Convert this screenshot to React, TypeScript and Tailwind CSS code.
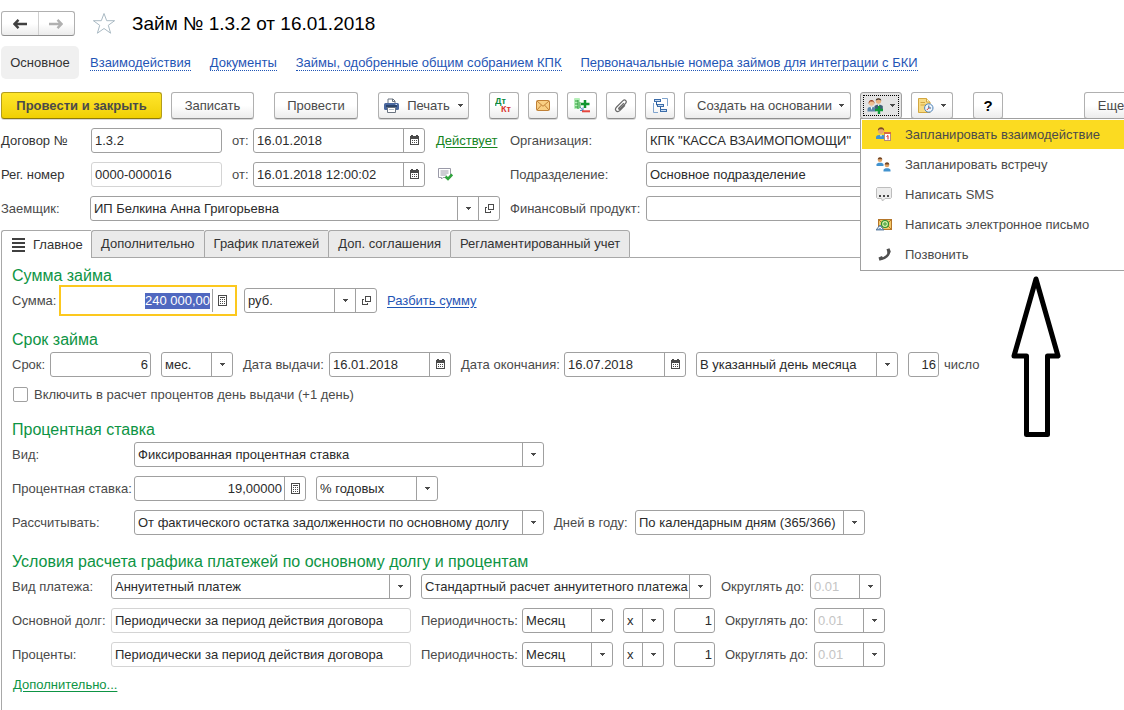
import React, { useEffect, useRef } from "react";
import clsx from "clsx";

const ChevronIcon = () => (
  <svg width="5" height="3" viewBox="0 0 5 3" className="shrink-0">
    <path d="M0 0H5V1H4V2H3V3H2V2H1V1H0Z" fill="#4a4a4a" />
  </svg>
);

const CalendarIcon = () => (
  <svg width="11" height="11" viewBox="0 0 11 11" shapeRendering="crispEdges">
    <path d="M1 1H2V0H4V1H7V0H9V1H10V10H1Z" fill="#4a4a4a" />
    <path d="M2 4H9V9H2Z" fill="#fff" />
    <path d="M3 5h1v1H3zM5 5h1v1H5zM7 5h1v1H7zM3 7h1v1H3zM5 7h1v1H5zM7 7h1v1H7z" fill="#4a4a4a" />
  </svg>
);

const CalculatorIcon = () => (
  <svg width="9" height="11" viewBox="0 0 9 11" shapeRendering="crispEdges">
    <path d="M.5 .5H8.5V10.5H.5Z" fill="#fff" stroke="#4a4a4a" />
    <path
      d="M2 2h5v1H2zM2 4h1v1H2zM4 4h1v1H4zM6 4h1v1H6zM2 6h1v1H2zM4 6h1v1H4zM6 6h1v1H6zM2 8h1v1H2zM4 8h1v1H4zM6 8h1v1H6z"
      fill="#4a4a4a"
    />
  </svg>
);

const OpenIcon = () => (
  <svg width="9" height="9" viewBox="0 0 9 9" shapeRendering="crispEdges">
    <path
      d="M3.5 .5H8.5V5.5H3.5ZM2 3.5H.5V8.5H5.5V7"
      fill="none"
      stroke="#4a4a4a"
    />
  </svg>
);

const ArrowIcon = ({ color, flip }: { color: string; flip?: boolean }) => (
  <svg
    width="14"
    height="10"
    viewBox="0 0 14 10"
    className={clsx(flip && "rotate-180")}
  >
    <path d="M5.5 .8L1.5 5L5.5 9.2M2 5H14" fill="none" stroke={color} strokeWidth="2.4" />
  </svg>
);

const StarIcon = () => (
  <svg width="24" height="23" viewBox="0 0 24 23">
    <path
      d="M12 1.5L14.7 8.7H22.6L16.3 13.3L18.6 21.2L12 16.5L5.4 21.2L7.7 13.3L1.4 8.7H9.3Z"
      fill="#fff"
      stroke="#a9b9c3"
    />
  </svg>
);

const PrinterIcon = () => (
  <svg width="15" height="15" viewBox="0 0 15 15">
    <path d="M4 6V1H9L11 3V6" fill="#fff" stroke="#6b7480" />
    <path d="M8.5 1V3.5H11" fill="none" stroke="#6b7480" />
    <rect x="0" y="5" width="15" height="7" rx="1.5" fill="#4a68a0" />
    <path d="M2 8H13" stroke="#1f3557" strokeWidth="1.4" />
    <rect x="11.5" y="6" width="1.5" height="1" fill="#cfe0f5" />
    <path d="M3.5 9.5H11.5V14.5H3.5Z" fill="#fff" stroke="#6b7480" />
    <path d="M5 11.5H10" stroke="#b5bcc6" />
  </svg>
);

const DebitCreditIcon = () => (
  <svg width="18" height="17" viewBox="0 0 18 17">
    <text x="0" y="7" fill="#0a8a3c" fontSize="9" fontWeight="bold">
      Дт
    </text>
    <text x="6" y="15" fill="#d8352f" fontSize="9" fontWeight="bold">
      Кт
    </text>
  </svg>
);

const MailIcon = () => (
  <svg width="14" height="11" viewBox="0 0 14 11">
    <rect x=".5" y=".5" width="13" height="10" rx="1" fill="#f9cf83" stroke="#c08036" />
    <path d="M1 1L7 6.3L13 1M1 10L5.3 5.2M13 10L8.7 5.2" fill="none" stroke="#c08036" />
  </svg>
);

const ListPlusIcon = () => (
  <svg width="16" height="15" viewBox="0 0 16 15">
    <rect x="0" y="0" width="6" height="11" rx="1" fill="#b6efb9" />
    <path d="M4 2V11M1 3H4M1 6H4M1 9H4M6 4V10" stroke="#2f9e3c" fill="none" />
    <path d="M11 2V10M7 6H15.5" stroke="#12952f" strokeWidth="2.5" />
    <path d="M6 9L9 12.5M9 9.5V12.5H6" stroke="#4a86c5" fill="none" />
    <path d="M8 13.3H16" stroke="#e4463e" strokeWidth="2" />
  </svg>
);

const ClipIcon = () => (
  <svg width="14" height="14" viewBox="0 0 14 14">
    <path
      d="M9.8 4.2L5 9C4.2 9.9 5.2 10.8 6 10L11.5 4.5C13.5 2.3 11 -.2 9 1.6L2.6 8C-.2 11 3 14.3 5.8 11.6L11 6.4"
      fill="none"
      stroke="#6a6a6a"
      strokeWidth="1.2"
    />
  </svg>
);

const StructureIcon = () => (
  <svg width="15" height="15" viewBox="0 0 15 15">
    <path d="M9 .5H14.5V8M.5 5V14.5H5" fill="none" stroke="#7fa3cd" />
    <path d="M3.5 4V7H5M7.5 9V12H8" fill="none" stroke="#2f5f9e" />
    <rect x="1.5" y="1.5" width="6" height="2" fill="#c9def5" stroke="#3b6ca9" />
    <rect x="4.5" y="6.5" width="6" height="2" fill="#c9def5" stroke="#3b6ca9" />
    <rect x="7.5" y="11.5" width="6" height="2" fill="#c9def5" stroke="#3b6ca9" />
  </svg>
);

const PeoplePlusIcon = () => (
  <svg width="17" height="16" viewBox="0 0 17 16" className="shrink-0">
    <circle cx="11.5" cy="3" r="2.7" fill="#e9b27e" />
    <path d="M8.7 2.6C9 -.6 14 -.6 14.3 2.6L11.5 1.6Z" fill="#3b3430" />
    <path d="M7.5 12V8.5C7.5 6 15.8 6 15.8 8.5V12Z" fill="#3f5f78" />
    <path d="M11 6.5L11.6 10L12.3 6.5Z" fill="#fff" />
    <circle cx="4.5" cy="5" r="2.7" fill="#f0c193" />
    <path d="M1.6 6C1 .8 8 .8 7.5 6L6.5 3.6H3Z" fill="#9a3f22" />
    <path d="M.5 13.5V11C.5 8 8.500 8 8.5 11V13.5Z" fill="#5c87a8" />
    <path d="M3.5 8.7L4.5 12L5.5 8.7Z" fill="#fff" />
    <path d="M12 8V16M8 12H16" stroke="#0f9a3a" strokeWidth="2.4" />
  </svg>
);

const NoteClockIcon = () => (
  <svg width="16" height="15" viewBox="0 0 16 15">
    <path d="M.5 .5H8.5L12 4V14.5H.5Z" fill="#f7db85" stroke="#d3a740" />
    <path d="M8.5 .5V4H12" fill="#fff3c8" stroke="#d3a740" />
    <path d="M2.5 4.5H7M2.5 7H8" stroke="#d3a740" />
    <circle cx="10.8" cy="10" r="4.2" fill="#eef5fc" stroke="#4d82b8" />
    <path d="M10.8 7.5V10H13" fill="none" stroke="#3a5f8a" />
    <path d="M10.8 10L8.8 12" stroke="#d8352f" />
  </svg>
);

const PersonCalendarIcon = () => (
  <svg width="16" height="15" viewBox="0 0 16 15">
    <circle cx="5" cy="4" r="3" fill="#e9aa6c" />
    <path d="M1.8 3.8C1.8 -.8 8.3 -.8 8.3 3.8L6.5 2.2H3.6Z" fill="#7c4a27" />
    <path d="M0 12V10C0 7 10 7 10 10V12Z" fill="#4293cf" />
    <path d="M4 7.8L5 10L6 7.800Z" fill="#fff" />
    <rect x="8.5" y="5.5" width="6" height="8" fill="#fff" stroke="#b58a78" />
    <path d="M8 6H15" stroke="#d86b45" strokeWidth="2" />
    <path d="M10.5 9.5L12 8.5V12.5" fill="none" stroke="#e02020" />
  </svg>
);

const TwoPeopleIcon = () => (
  <svg width="15" height="15" viewBox="0 0 15 15">
    <circle cx="4" cy="2.8" r="2.3" fill="#e3a468" />
    <path d="M1.7 2.3C2 -.6 6 -.6 6.3 2.3Z" fill="#6f4526" />
    <path d="M.5 9V7.5C.5 5 7.5 5 7.5 7.5V9Z" fill="#4293cf" />
    <circle cx="11" cy="8" r="2.3" fill="#e3a468" />
    <path d="M8.7 7.5C9 4.6 13 4.6 13.3 7.5Z" fill="#6f4526" />
    <path d="M7.5 14.5V13C7.5 10.5 14.5 10.5 14.5 13V14.5Z" fill="#4293cf" />
  </svg>
);

const SmsIcon = () => (
  <svg width="16" height="15" viewBox="0 0 16 15">
    <path
      d="M1.5 .5H14.5L15.5 1.5V10.5L14.5 11.5H9L6.5 14L5.5 11.5H1.5L.5 10.5V1.5Z"
      fill="#ededed"
      stroke="#bdbdbd"
    />
    <path d="M3 8h2v2H3zM7 8h2v2H7zM11 8h2v2H11z" fill="#4a4a4a" />
  </svg>
);

const EmailIcon = () => (
  <svg width="16" height="12" viewBox="0 0 16 12">
    <rect x="2.5" y=".5" width="13" height="10" fill="#f3c766" stroke="#b5762a" />
    <path d="M3 1L6 4M15 1L12 4M15 10L12 7" stroke="#b5762a" />
    <circle cx="9" cy="5" r="3.5" fill="#d9f2a8" stroke="#2d9130" strokeWidth="1.2" />
    <circle cx="9" cy="5" r="1.2" fill="none" stroke="#2d9130" />
    <path d="M0 11L4 6L8 11Z" fill="#7fa6cc" stroke="#4b6f96" strokeWidth=".8" />
    <path d="M2 9.5L4 8L6 10" stroke="#fff" fill="none" />
  </svg>
);

const PhoneIcon = () => (
  <svg width="13" height="13" viewBox="0 0 13 13" className="ml-[2px]">
    <path
      d="M10.8 2C12 6.5 6.5 11.5 2 10.8"
      fill="none"
      stroke="#505050"
      strokeWidth="2.6"
    />
    <path d="M8.5 1.2L11.5 .2L12.8 4.2L9.8 5.2ZM.5 9.5L4 8L5.4 11L1.5 12.8Z" fill="#505050" />
  </svg>
);

const CommentCheckIcon = () => (
  <svg width="15" height="13" viewBox="0 0 15 13">
    <path d="M.5 .5H12.5V9.5H5L3.5 11V9.5H.5Z" fill="#fff" stroke="#9a9aa8" />
    <path d="M2.5 3H10.5M2.5 5H10.5M2.5 7H8.5" stroke="#9a9aa8" />
    <path d="M7.5 8.5L10 11L14.2 6.5" fill="none" stroke="#2fa43c" strokeWidth="2.6" />
  </svg>
);

const MenuLinesIcon = () => (
  <svg width="13" height="14" viewBox="0 0 13 14" shapeRendering="crispEdges">
    <path d="M0 0h13v2H0zM0 4h13v2H0zM0 8h13v2H0zM0 12h13v2H0z" fill="#404040" />
  </svg>
);

type BoxProps = {
  className?: string;
  muted?: boolean;
  children: React.ReactNode;
};

const Box = ({ className, muted, children }: BoxProps) => (
  <div
    className={clsx(
      "flex h-[25px] shrink-0 overflow-hidden rounded-[3px] border bg-white",
      muted ? "border-[#d4d4d4]" : "border-[#a0a0a0]",
      className,
    )}
  >
    {children}
  </div>
);

const BoxButton = ({
  label,
  children,
}: {
  label: string;
  children: React.ReactNode;
}) => (
  <button
    type="button"
    aria-label={label}
    className="flex w-[21px] shrink-0 items-center justify-center border-l border-[#a0a0a0]"
  >
    {children}
  </button>
);

type FieldProps = {
  id: string;
  value: string;
  className?: string;
  right?: boolean;
  muted?: boolean;
  label?: string;
};

const TextField = ({ id, value, className, right, muted, label }: FieldProps) => (
  <Box className={className} muted={muted}>
    <input
      id={id}
      aria-label={label}
      defaultValue={value}
      readOnly={muted}
      className={clsx(
        "w-full min-w-0 text-[#2b2b2b] outline-none",
        right ? "pr-[2px] text-right" : "px-[3px]",
      )}
    />
  </Box>
);

const DateField = ({ id, value, className, label }: FieldProps) => (
  <Box className={className}>
    <input
      id={id}
      aria-label={label}
      defaultValue={value}
      className="min-w-0 flex-1 px-[3px] text-[#2b2b2b] outline-none"
    />
    <BoxButton label="Выбрать дату">
      <CalendarIcon />
    </BoxButton>
  </Box>
);

type SelectFieldProps = FieldProps & { open?: boolean; placeholder?: boolean };

const SelectField = ({
  id,
  value,
  className,
  label,
  open,
  placeholder,
}: SelectFieldProps) => (
  <Box className={className}>
    <div className="relative flex min-w-0 flex-1">
      <select
        id={id}
        aria-label={label}
        className={clsx(
          "w-full appearance-none pr-[21px] pl-[3px] outline-none",
          placeholder ? "text-[#c4c4c4]" : "text-[#2b2b2b]",
        )}
      >
        <option>{value}</option>
      </select>
      <span className="pointer-events-none absolute inset-y-0 right-0 flex w-[21px] items-center justify-center border-l border-[#a0a0a0]">
        <ChevronIcon />
      </span>
    </div>
    {open && (
      <BoxButton label="Открыть">
        <OpenIcon />
      </BoxButton>
    )}
  </Box>
);

const Label = ({
  htmlFor,
  className,
  children,
}: {
  htmlFor: string;
  className?: string;
  children: React.ReactNode;
}) => (
  <label
    htmlFor={htmlFor}
    className={clsx("shrink-0 whitespace-nowrap", className)}
  >
    {children}
  </label>
);

const Row = ({ children }: { children: React.ReactNode }) => (
  <div className="flex h-[25px] items-center gap-[10px]">{children}</div>
);

const Group = ({ children }: { children: React.ReactNode }) => (
  <div className="flex shrink-0 items-center">{children}</div>
);

const Section = ({
  title,
  children,
}: {
  title: string;
  children: React.ReactNode;
}) => (
  <section>
    <h2 className="text-[16px] leading-[25px] whitespace-nowrap text-[#0d9444]">
      {title}
    </h2>
    <div className="flex flex-col gap-[9px]">{children}</div>
  </section>
);

type ToolButtonProps = {
  className?: string;
  label?: string;
  children: React.ReactNode;
};

const ToolButton = ({ className, label, children }: ToolButtonProps) => (
  <button
    type="button"
    aria-label={label}
    className={clsx(
      "flex h-[27px] shrink-0 items-center justify-center rounded-[3px] border border-[#b0b0b0] border-b-[#8e8e8e] bg-linear-to-b from-white from-50% to-[#ececec] whitespace-nowrap shadow-[0_1px_0_#d8d8d8]",
      className,
    )}
  >
    {children}
  </button>
);

const links = [
  "Взаимодействия",
  "Документы",
  "Займы, одобренные общим собранием КПК",
  "Первоначальные номера займов для интеграции с БКИ",
];

const menuItems = [
  { text: "Запланировать взаимодействие", icon: <PersonCalendarIcon /> },
  { text: "Запланировать встречу", icon: <TwoPeopleIcon /> },
  { text: "Написать SMS", icon: <SmsIcon /> },
  { text: "Написать электронное письмо", icon: <EmailIcon /> },
  { text: "Позвонить", icon: <PhoneIcon /> },
];

const tabs = [
  "Дополнительно",
  "График платежей",
  "Доп. соглашения",
  "Регламентированный учет",
];

const InteractionMenu = () => (
  <div
    role="menu"
    className="absolute top-[26px] left-0 z-10 flex w-[280px] flex-col gap-px border border-[#a0a0a0] bg-white p-px"
  >
    {menuItems.map((item, i) => (
      <button
        key={item.text}
        type="button"
        role="menuitem"
        className={clsx(
          "flex h-[29px] items-center pl-[14px] text-left whitespace-nowrap",
          i === 0 && "bg-[#fbdb21]",
        )}
      >
        <span className="flex w-[29px] items-center">{item.icon}</span>
        {item.text}
      </button>
    ))}
  </div>
);

const Toolbar = () => (
  <div className="mt-[13px] flex gap-[9px] pl-px">
    <button
      type="button"
      className="h-[27px] w-[161px] shrink-0 rounded-[3px] border border-[#b39d1b] border-b-[#8d7a0c] bg-linear-to-b from-[#ffe629] to-[#f0d000] font-bold shadow-[0_1px_0_#d8d8d8]"
    >
      Провести и закрыть
    </button>
    <ToolButton className="w-[83px]">Записать</ToolButton>
    <ToolButton className="ml-[11px] w-[84px]">Провести</ToolButton>
    <ToolButton className="ml-[11px] w-[91px] gap-[8px]">
      <PrinterIcon />
      Печать
      <ChevronIcon />
    </ToolButton>
    <ToolButton className="ml-[11px] w-[30px]" label="Проводки">
      <DebitCreditIcon />
    </ToolButton>
    <ToolButton className="w-[30px]" label="Письмо">
      <MailIcon />
    </ToolButton>
    <ToolButton className="w-[30px]" label="Добавить">
      <ListPlusIcon />
    </ToolButton>
    <ToolButton className="w-[30px]" label="Файлы">
      <ClipIcon />
    </ToolButton>
    <ToolButton className="w-[30px]" label="Структура">
      <StructureIcon />
    </ToolButton>
    <ToolButton className="w-[167px] gap-[7px] pl-[6px]">
      Создать на основании
      <ChevronIcon />
    </ToolButton>
    <div className="relative shrink-0">
      <button
        type="button"
        aria-label="Взаимодействия"
        aria-haspopup="menu"
        aria-expanded="true"
        className="flex h-[27px] w-[42px] rounded-[3px] border border-[#a0a0a0] bg-[#e4e4e4] p-[2px]"
      >
        <span className="flex h-full w-full items-center justify-between border border-dotted border-black px-[3px]">
          <PeoplePlusIcon />
          <ChevronIcon />
        </span>
      </button>
      <InteractionMenu />
    </div>
    <ToolButton className="w-[42px] gap-[7px]" label="Напоминания">
      <NoteClockIcon />
      <ChevronIcon />
    </ToolButton>
    <ToolButton className="ml-[11px] w-[30px] text-[15px] font-bold text-black">
      ?
    </ToolButton>
    <ToolButton className="-mr-[20px] ml-auto w-[60px] pr-[6px]">Еще</ToolButton>
  </div>
);

const Header = () => (
  <div className="mt-[9px] flex gap-[10px]">
    <div className="flex w-[500px] shrink-0 flex-col gap-[9px]">
      <div className="flex h-[25px] items-center">
        <Label htmlFor="contract" className="w-[91px] pl-px text-[#333]">
          Договор №
        </Label>
        <TextField id="contract" value="1.3.2" className="w-[131px]" />
        <Label htmlFor="contract-date" className="w-[31px] pl-[10px]">
          от:
        </Label>
        <DateField id="contract-date" value="16.01.2018" className="w-[172px]" />
        <a href="#status" className="ml-[11px] text-[#15841f] underline underline-offset-2">
          Действует
        </a>
      </div>
      <div className="flex h-[25px] items-center">
        <Label htmlFor="reg" className="w-[91px] pl-px text-[#333]">
          Рег. номер
        </Label>
        <TextField id="reg" value="0000-000016" className="w-[131px]" muted />
        <Label htmlFor="reg-date" className="w-[31px] pl-[10px]">
          от:
        </Label>
        <DateField id="reg-date" value="16.01.2018 12:00:02" className="w-[172px]" />
        <button type="button" aria-label="Комментарий" className="ml-[13px]">
          <CommentCheckIcon />
        </button>
      </div>
      <div className="flex h-[25px] items-center">
        <Label htmlFor="borrower" className="w-[90px] pl-px">
          Заемщик:
        </Label>
        <SelectField
          id="borrower"
          value="ИП Белкина Анна Григорьевна"
          className="w-[410px]"
          open
        />
      </div>
    </div>
    <div className="flex min-w-0 flex-1 flex-col gap-[9px]">
      <div className="flex items-center">
        <Label htmlFor="org" className="w-[136px]">
          Организация:
        </Label>
        <SelectField
          id="org"
          value={'КПК "КАССА ВЗАИМОПОМОЩИ"'}
          className="flex-1"
          open
        />
      </div>
      <div className="flex items-center">
        <Label htmlFor="dept" className="w-[136px]">
          Подразделение:
        </Label>
        <SelectField
          id="dept"
          value="Основное подразделение"
          className="flex-1"
          open
        />
      </div>
      <div className="flex items-center">
        <Label htmlFor="product" className="w-[136px]">
          Финансовый продукт:
        </Label>
        <SelectField id="product" value="" className="flex-1" open />
      </div>
    </div>
  </div>
);

const AmountField = () => {
  const ref = useRef<HTMLInputElement>(null);

  useEffect(() => {
    ref.current?.focus();
    ref.current?.select();
  }, []);

  return (
    <div className="flex h-[31px] w-[178px] shrink-0 items-center border-2 border-[#fcc81e] bg-white">
      <input
        ref={ref}
        id="amount"
        defaultValue="240 000,00"
        className="h-[16px] min-w-0 flex-1 pr-[2px] text-right leading-[16px] text-[#2b2b2b] outline-none selection:bg-[#5068c0] selection:text-white"
      />
      <button
        type="button"
        aria-label="Калькулятор"
        className="flex h-[23px] w-[23px] items-center border-l border-[#a0a0a0] pl-[5px]"
      >
        <CalculatorIcon />
      </button>
    </div>
  );
};

const PeriodRow = ({ id, label }: { id: string; label: string }) => (
  <Row>
    <Group>
      <Label htmlFor={id} className="w-[99px]">
        {label}
      </Label>
      <TextField
        id={id}
        value="Периодически за период действия договора"
        className="w-[300px]"
        muted
      />
    </Group>
    <Group>
      <Label htmlFor={`${id}-period`} className="w-[101px]">
        Периодичность:
      </Label>
      <SelectField id={`${id}-period`} value="Месяц" className="w-[91px]" />
    </Group>
    <SelectField id={`${id}-mult`} value="x" label="Множитель" className="w-[41px]" />
    <TextField id={`${id}-count`} value="1" label="Количество" className="w-[41px]" right />
    <Group>
      <Label htmlFor={`${id}-round`} className="w-[89px]">
        Округлять до:
      </Label>
      <SelectField id={`${id}-round`} value="0.01" className="w-[71px]" placeholder />
    </Group>
  </Row>
);

const MainTab = () => (
  <div className="ml-px flex flex-1 flex-col gap-[14px] border-l border-[#a8a8a8] pt-[5px] pl-[10px]">
    <Section title="Сумма займа">
      <Row>
        <Group>
          <Label htmlFor="amount" className="w-[47px]">
            Сумма:
          </Label>
          <AmountField />
        </Group>
        <SelectField
          id="currency"
          value="руб."
          label="Валюта"
          className="-ml-[3px] w-[133px]"
          open
        />
        <a href="#split" className="text-[#1f55b5] underline underline-offset-2">
          Разбить сумму
        </a>
      </Row>
    </Section>

    <Section title="Срок займа">
      <Row>
        <Group>
          <Label htmlFor="term" className="w-[38px]">
            Срок:
          </Label>
          <TextField id="term" value="6" className="w-[101px]" right />
        </Group>
        <SelectField id="term-unit" value="мес." label="Единица срока" className="w-[72px]" />
        <Group>
          <Label htmlFor="issue" className="w-[86px]">
            Дата выдачи:
          </Label>
          <DateField id="issue" value="16.01.2018" className="w-[122px]" />
        </Group>
        <Group>
          <Label htmlFor="end" className="w-[103px]">
            Дата окончания:
          </Label>
          <DateField id="end" value="16.07.2018" className="w-[122px]" />
        </Group>
        <SelectField
          id="pay-day"
          value="В указанный день месяца"
          label="День платежа"
          className="w-[202px]"
        />
        <Group>
          <TextField id="day" value="16" className="w-[31px]" right />
          <Label htmlFor="day" className="pl-[5px]">
            число
          </Label>
        </Group>
      </Row>
      <div className="flex h-[17px] items-center gap-[6px] pl-px">
        <input
          id="include-day"
          type="checkbox"
          className="size-[15px] appearance-none rounded-[2px] border border-[#a0a0a0] bg-white checked:bg-[#5068c0]"
        />
        <Label htmlFor="include-day">
          Включить в расчет процентов день выдачи (+1 день)
        </Label>
      </div>
    </Section>

    <Section title="Процентная ставка">
      <Row>
        <Group>
          <Label htmlFor="rate-kind" className="w-[122px]">
            Вид:
          </Label>
          <SelectField
            id="rate-kind"
            value="Фиксированная процентная ставка"
            className="w-[410px]"
          />
        </Group>
      </Row>
      <Row>
        <Group>
          <Label htmlFor="rate" className="w-[122px]">
            Процентная ставка:
          </Label>
          <Box className="w-[172px]">
            <input
              id="rate"
              defaultValue="19,00000"
              className="min-w-0 flex-1 pr-[2px] text-right text-[#2b2b2b] outline-none"
            />
            <BoxButton label="Калькулятор">
              <CalculatorIcon />
            </BoxButton>
          </Box>
        </Group>
        <SelectField
          id="rate-unit"
          value="% годовых"
          label="Единица ставки"
          className="w-[122px]"
        />
      </Row>
      <Row>
        <Group>
          <Label htmlFor="calc" className="w-[122px]">
            Рассчитывать:
          </Label>
          <SelectField
            id="calc"
            value="От фактического остатка задолженности по основному долгу"
            className="w-[410px]"
          />
        </Group>
        <Group>
          <Label htmlFor="year-days" className="w-[81px]">
            Дней в году:
          </Label>
          <SelectField
            id="year-days"
            value="По календарным дням (365/366)"
            className="w-[230px]"
          />
        </Group>
      </Row>
    </Section>

    <Section title="Условия расчета графика платежей по основному долгу и процентам">
      <Row>
        <Group>
          <Label htmlFor="pay-kind" className="w-[99px]">
            Вид платежа:
          </Label>
          <SelectField id="pay-kind" value="Аннуитетный платеж" className="w-[300px]" />
        </Group>
        <SelectField
          id="pay-calc"
          value="Стандартный расчет аннуитетного платежа"
          label="Расчет платежа"
          className="w-[290px]"
        />
        <Group>
          <Label htmlFor="round" className="w-[89px]">
            Округлять до:
          </Label>
          <SelectField id="round" value="0.01" className="w-[71px]" placeholder />
        </Group>
      </Row>
      <PeriodRow id="principal" label="Основной долг:" />
      <PeriodRow id="interest" label="Проценты:" />
      <a href="#more" className="self-start pl-px text-[#0d9444] underline underline-offset-2">
        Дополнительно...
      </a>
    </Section>
  </div>
);

export default function App() {
  return (
    <div className="relative flex min-h-screen flex-col overflow-hidden bg-white font-['Liberation_Sans',Arial,sans-serif] text-[13px] leading-[18px] text-[#4a4a4a]">
      <div className="flex items-center pt-[11px] pl-px">
        <div className="flex h-[25px] w-[74px] rounded-[3px] border border-[#b0b0b0] border-b-[#8e8e8e] bg-linear-to-b from-white from-50% to-[#ececec]">
          <button
            type="button"
            aria-label="Назад"
            className="flex flex-1 items-center justify-center border-r border-[#d0d0d0]"
          >
            <ArrowIcon color="#404040" />
          </button>
          <button
            type="button"
            aria-label="Вперед"
            className="flex flex-1 items-center justify-center"
          >
            <ArrowIcon color="#b0b0b0" flip />
          </button>
        </div>
        <button type="button" aria-label="В избранное" className="ml-[17px]">
          <StarIcon />
        </button>
        <h1 className="ml-[16px] text-[19px] leading-[25px] whitespace-nowrap text-black">
          Займ № 1.3.2 от 16.01.2018
        </h1>
      </div>

      <nav className="mt-[10px] flex h-[33px] items-center gap-[19px] pl-px whitespace-nowrap">
        <a
          href="#main"
          className="-mr-[8px] flex h-full w-[78px] items-center justify-center rounded-[5px] bg-[#f0f0f0] pt-px text-[#333]"
        >
          Основное
        </a>
        {links.map((link) => (
          <a
            key={link}
            href="#link"
            className="border-b border-dotted border-[#1f55b5] pt-px leading-[15px] text-[#1f55b5]"
          >
            {link}
          </a>
        ))}
      </nav>

      <Toolbar />
      <Header />

      <div role="tablist" className="mt-[9px] flex h-[28px] pl-px text-[#333]">
        <button
          type="button"
          role="tab"
          aria-selected="true"
          className="flex w-[90px] shrink-0 items-center gap-[8px] rounded-tl-[3px] border-t border-l border-[#a8a8a8] pl-[10px]"
        >
          <MenuLinesIcon />
          Главное
        </button>
        {tabs.map((tab) => (
          <button
            key={tab}
            type="button"
            role="tab"
            aria-selected="false"
            className="shrink-0 rounded-tl-[3px] border border-r-0 border-[#a8a8a8] bg-[#eaeaea] px-[9px] whitespace-nowrap last-of-type:rounded-tr-[3px] last-of-type:border-r"
          >
            {tab}
          </button>
        ))}
        <span className="flex-1 border-b border-[#a8a8a8]" />
      </div>

      <MainTab />

      <svg
        width="52"
        height="164"
        viewBox="0 0 52 164"
        className="pointer-events-none absolute top-[275px] left-[1010px]"
      >
        <path
          d="M26 4L48 81H37.5V159.5H16.5V81H4Z"
          fill="#fff"
          stroke="#000"
          strokeWidth="5"
          strokeLinejoin="round"
        />
      </svg>
    </div>
  );
}
